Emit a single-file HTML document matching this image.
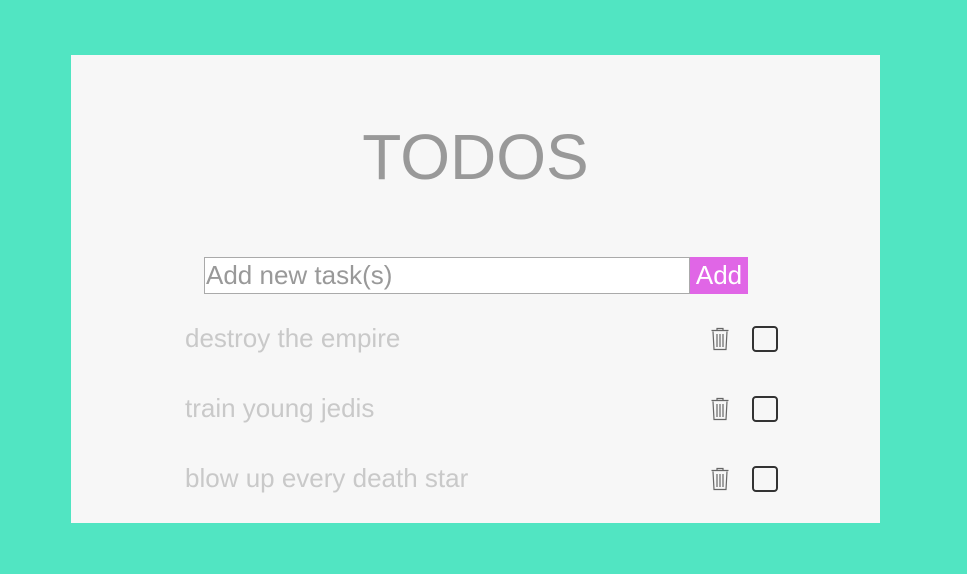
<!DOCTYPE html>
<html><head><meta charset="utf-8"><style>
html,body{margin:0;padding:0}
body{width:967px;height:574px;background:#51e5c2;position:relative;overflow:hidden;font-family:"Liberation Sans",Arial,sans-serif}
.card{position:absolute;left:71px;top:55px;width:809px;height:468px;background:#f7f7f7}
h1{position:absolute;left:71px;width:809px;top:121px;margin:0;text-align:center;font-weight:normal;font-size:64px;color:#999;line-height:72px}
.inp{position:absolute;left:204px;top:257px;height:35px;border:1px solid #aaa;background:#fff;box-sizing:content-box;font-size:26px;color:#999;line-height:35px;padding-left:1px;width:483px}
.btn{position:absolute;left:690px;top:257px;width:58px;height:37px;background:#e066e6;color:#fff;font-size:26px;line-height:37px;text-align:center}
.item{position:absolute;left:185px;font-size:26px;color:#c9c9c9;line-height:30px}
.tr{position:absolute;left:710px;width:20px;height:24px}
.cb{position:absolute;left:752px;width:22px;height:22px;border:2px solid #333;border-radius:4px}
</style></head><body>
<div class="card"></div>
<h1>TODOS</h1>
<div class="inp">Add new task(s)</div>
<div class="btn">Add</div>

<div class="item" style="top:323px">destroy the empire</div>
<div class="item" style="top:393px">train young jedis</div>
<div class="item" style="top:463px">blow up every death star</div>

<svg class="tr" style="top:327px" viewBox="0 0 20 24" fill="none" stroke="#666" stroke-width="1.2"><path d="M7 3V1.5h6V3"/><path d="M1.5 3.5h17"/><path d="M3 4.5l1 18h12l1-18"/><path d="M7 7v13M10 7v13M13 7v13"/></svg>
<svg class="tr" style="top:397px" viewBox="0 0 20 24" fill="none" stroke="#666" stroke-width="1.2"><path d="M7 3V1.5h6V3"/><path d="M1.5 3.5h17"/><path d="M3 4.5l1 18h12l1-18"/><path d="M7 7v13M10 7v13M13 7v13"/></svg>
<svg class="tr" style="top:467px" viewBox="0 0 20 24" fill="none" stroke="#666" stroke-width="1.2"><path d="M7 3V1.5h6V3"/><path d="M1.5 3.5h17"/><path d="M3 4.5l1 18h12l1-18"/><path d="M7 7v13M10 7v13M13 7v13"/></svg>

<div class="cb" style="top:326px"></div>
<div class="cb" style="top:396px"></div>
<div class="cb" style="top:466px"></div>
</body></html>
